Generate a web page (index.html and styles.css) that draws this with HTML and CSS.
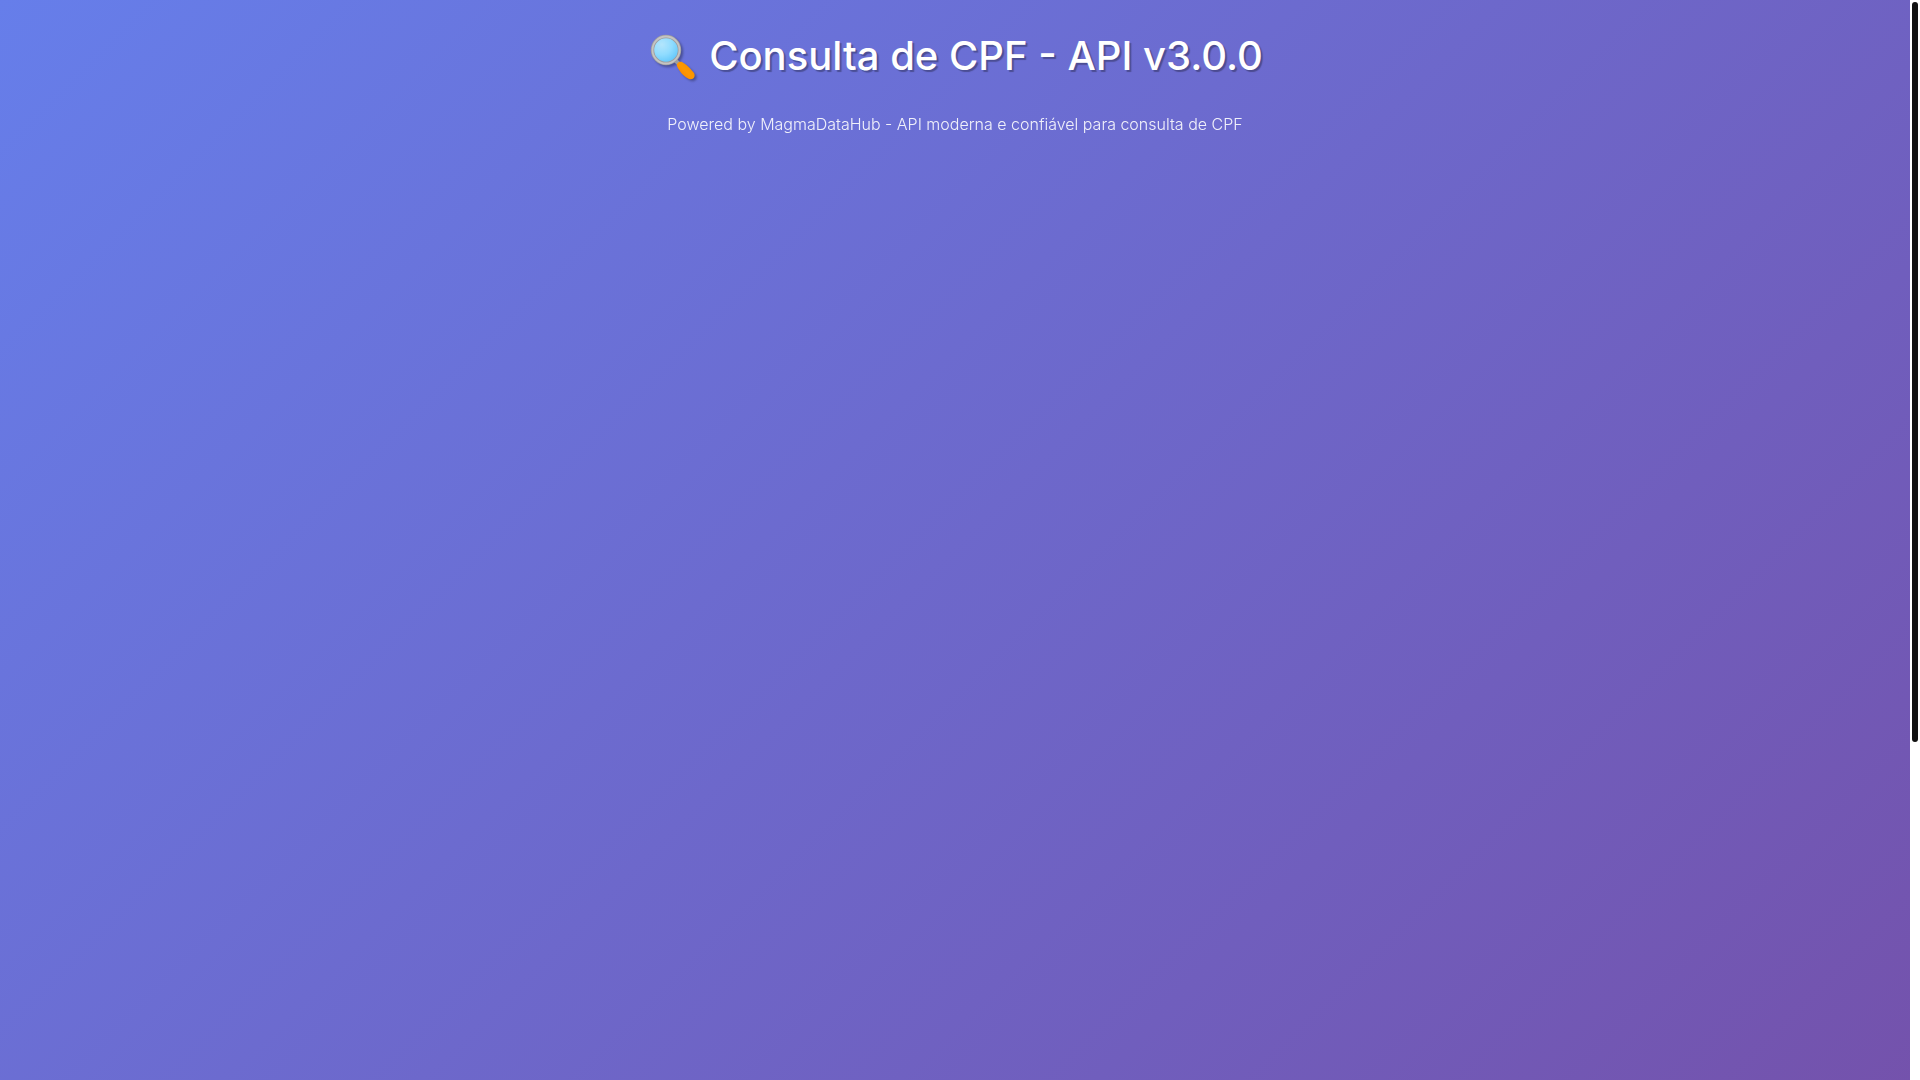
FILE: index.html
```html
<!DOCTYPE html>
<html lang="pt-BR">
<head>
  <meta charset="UTF-8" />
  <meta name="viewport" content="width=device-width, initial-scale=1.0" />
  <title>Consulta de CPF - API v3.0.0</title>
  <link rel="stylesheet" href="styles.css">
</head>
<body>
  <div class="window">
    <div class="scroller">
      <div class="page">
        <header class="header">
          <h1>
            <svg class="lens" viewBox="-2 -2 52 50" aria-hidden="true">
              <defs>
                <radialGradient id="glass" cx="0.35" cy="0.3" r="0.75">
                  <stop offset="0" stop-color="#b3e5fc" />
                  <stop offset="0.5" stop-color="#90dcff" />
                  <stop offset="1" stop-color="#5cc4fa" />
                </radialGradient>
                <linearGradient id="handle" x1="0" y1="1" x2="1" y2="0">
                  <stop offset="0" stop-color="#f57c00" />
                  <stop offset="0.5" stop-color="#ff9800" />
                  <stop offset="1" stop-color="#ef8a00" />
                </linearGradient>
              </defs>
              <path d="M26 27l6 6" stroke="#9e9e9e" stroke-width="4" />
              <path d="M28 33c-1-2 2-5 5-4 4 2 9 7 12 11 2 4-1 7-5 6-5-2-10-8-12-13z" fill="url(#handle)" />
              <circle cx="17" cy="17" r="13.5" fill="url(#glass)" stroke="#9e9e9e" stroke-width="3.4" />
              <circle cx="17" cy="17" r="13.5" fill="none" stroke="#c4c4c4" stroke-width="1.8" />
            </svg>
            Consulta de CPF - API v3.0.0
          </h1>
          <p>Powered by MagmaDataHub - API moderna e confiável para consulta de CPF</p>
        </header>
        <main class="content"></main>
      </div>
    </div>
    <div class="scrollbar" aria-hidden="true">
      <div class="thumb"></div>
    </div>
  </div>
</body>
</html>
```

FILE: styles.css
```css
/* Reset & Global Styles */
* {
  box-sizing: border-box;
  margin: 0;
  padding: 0;
}
body {
  font-family: Inter, sans-serif;
  color: white;
}

/* Page with its own scrollbar */
.window {
  display: flex;
  height: 100vh;
}
.scroller {
  flex: 1;
  overflow-y: auto;
}
.scrollbar {
  width: 10px;
  padding: 2px;
  background: white;
}
.thumb {
  height: 68.8%;
  background: #111;
  border-radius: 3px;
}
.page {
  min-height: 145vh;
  padding: 20px;
  background: linear-gradient(135deg, #667eea 0%, #764ba2 100%);
}

/* Header */
.header {
  text-align: center;
}
.header h1 {
  display: flex;
  justify-content: center;
  align-items: center;
  gap: 10px;
  margin-bottom: 20px;
  font-size: 40px;
  font-weight: 500;
  line-height: 72px;
  text-shadow: 2px 2px 1px rgba(0, 0, 0, 0.3);
}
.lens {
  width: 52px;
  height: 50px;
  filter: drop-shadow(2px 2px 1px rgba(0, 0, 0, 0.3));
}
.header p {
  font-size: 16px;
  font-weight: 350;
  line-height: 24px;
  opacity: 0.9;
}
```
